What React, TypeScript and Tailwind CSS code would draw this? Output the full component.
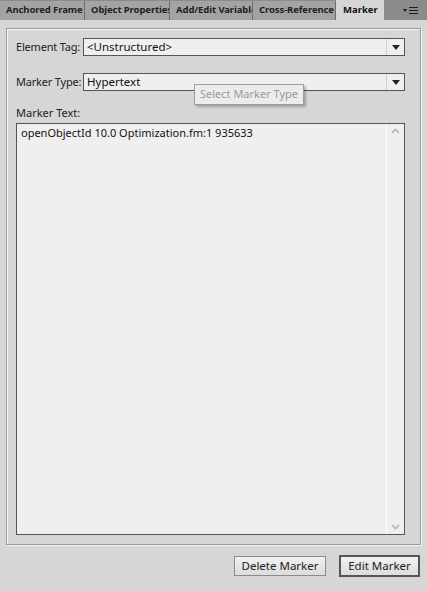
import React from "react";

const tabs = ["Anchored Frame", "Object Properties", "Add/Edit Variables", "Cross-Reference"];
const tabWidths = ["w-[85px]", "w-[85px]", "w-[83px]", "w-[83px]"];

const DropArrow = () => (
  <svg width="8" height="5" viewBox="0 0 8 5">
    <path d="M0 0h8L4 5z" fill="#222" />
  </svg>
);

const Select = ({ value }: { value: string }) => (
  <div className="flex h-[18px] flex-1 border border-[#555] bg-[#efefef]">
    <div className="flex flex-1 items-center px-[3px] text-[11.5px] text-[#111]">{value}</div>
    <div className="flex w-[18px] items-center justify-center border-l border-[#cfcfcf]">
      <DropArrow />
    </div>
  </div>
);

export default function App() {
  return (
    <div
      className="flex h-[591px] w-[427px] flex-col bg-[#d6d6d6]"
      style={{ fontFamily: '"Noto Sans", "Open Sans", sans-serif' }}
    >
      {/* tab strip */}
      <div className="flex h-[20px] items-end bg-[#8b8b8b]">
        {tabs.map((t, i) => (
          <div
            key={t}
            className={`${tabWidths[i]} flex h-[19px] shrink-0 items-center overflow-hidden whitespace-nowrap border-r border-[#6e6e6e] bg-[#a3a3a3] pl-[6px] text-[9.5px] font-bold tracking-[-0.1px] text-[#1e1e1e]`}
          >
            {t}
          </div>
        ))}
        <div className="flex h-[20px] w-[48px] shrink-0 items-center bg-[#d6d6d6] pl-[7px] text-[9.5px] font-bold text-[#111]">
          Marker
        </div>
        <div className="flex flex-1 items-center justify-end pb-[4px] pr-[8px]">
          <svg width="16" height="9" viewBox="0 0 16 9">
            <path d="M0 2h4L2 5z" fill="#1e1e1e" />
            <path d="M6 0.5h9M6 3.5h9M6 6.5h9" stroke="#1e1e1e" strokeWidth="1.2" />
          </svg>
        </div>
      </div>

      {/* group box */}
      <div className="mx-[6px] mt-[8px] flex h-[517px] flex-col border border-[#9a9a9a] shadow-[1px_1px_0_#f4f4f4,inset_1px_1px_0_#f4f4f4] px-[9px] pt-[9px] pb-[9px]">
        <div className="flex items-center gap-[1px] pr-[6px]">
          <span className="w-[66px] shrink-0 whitespace-nowrap text-[11px] tracking-[-0.2px] text-[#222]">Element Tag:</span>
          <Select value="<Unstructured>" />
        </div>
        <div className="relative mt-[17px] flex items-center gap-[1px] pr-[6px]">
          <span className="w-[66px] shrink-0 whitespace-nowrap text-[11px] tracking-[-0.2px] text-[#222]">Marker Type:</span>
          <Select value="Hypertext" />
          <div className="absolute left-[178px] top-[11px] whitespace-nowrap border border-[#9d9d9d] bg-[#ececec] px-[5px] py-[1px] text-[11px] text-[#9a9a9a] shadow-[2px_2px_2px_rgba(0,0,0,0.25)]">
            Select Marker Type
          </div>
        </div>
        <div className="mt-[14px] text-[11px] text-[#222]">Marker Text:</div>
        <div className="mt-[1px] mr-[6px] flex flex-1 border border-[#555] bg-[#efefef]">
          <div className="flex-1 px-[4px] pt-[1px] text-[11px] text-[#111]">
            openObjectId 10.0 Optimization.fm:1 935633
          </div>
          <div className="flex w-[18px] flex-col items-center justify-between border-l border-white py-[4px]">
            <svg width="9" height="6" viewBox="0 0 9 6">
              <path d="M1 5l3.5-3.5L8 5" stroke="#b5b5b5" strokeWidth="1.6" fill="none" />
            </svg>
            <svg width="9" height="6" viewBox="0 0 9 6">
              <path d="M1 1l3.5 3.5L8 1" stroke="#b5b5b5" strokeWidth="1.6" fill="none" />
            </svg>
          </div>
        </div>
      </div>

      {/* buttons */}
      <div className="mt-[11px] flex justify-end gap-[13px] pr-[7px]">
        <button className="h-[20px] w-[92px] border border-[#8a8a8a] bg-gradient-to-b from-[#f2f2f2] to-[#dcdcdc] text-[11.5px] text-[#222]">
          Delete Marker
        </button>
        <button className="h-[22px] w-[81px] -mt-[1px] border-2 border-[#555] bg-gradient-to-b from-[#f2f2f2] to-[#dcdcdc] text-[11.5px] text-[#222]">
          Edit Marker
        </button>
      </div>
    </div>
  );
}
